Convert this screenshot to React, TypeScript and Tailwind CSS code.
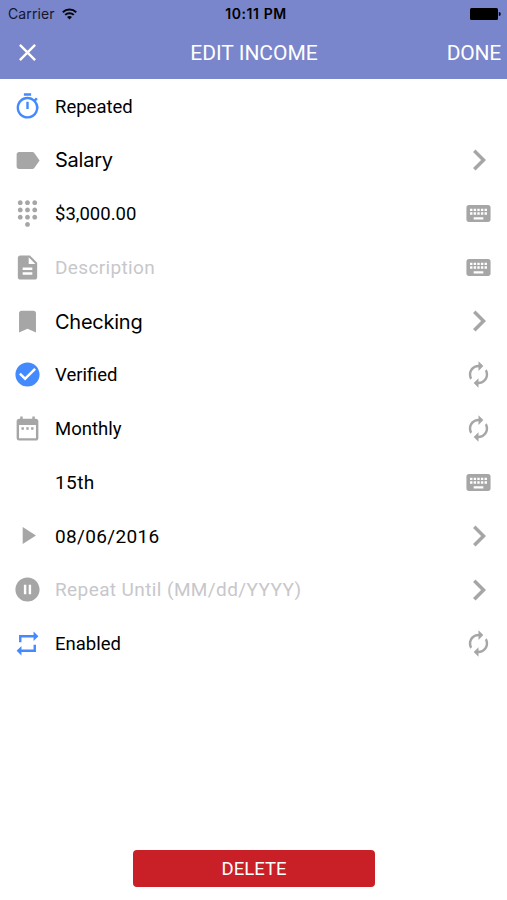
import type { IconType } from 'react-icons'
import {
  MdAutorenew,
  MdBookmark,
  MdCheckCircle,
  MdChevronRight,
  MdClose,
  MdDateRange,
  MdDescription,
  MdDialpad,
  MdKeyboard,
  MdLabel,
  MdOutlineTimer,
  MdPauseCircleFilled,
  MdPlayArrow,
  MdRepeat,
} from 'react-icons/md'

interface RowProps {
  icon?: IconType
  label: string
  action?: 'open' | 'type' | 'toggle'
  active?: boolean
  textClass?: string
}

const rows: RowProps[] = [
  { icon: MdOutlineTimer, label: 'Repeated', active: true },
  { icon: MdLabel, label: 'Salary', action: 'open', textClass: 'font-[Inter] text-[20px] tracking-[-0.25px]' },
  { icon: MdDialpad, label: '$3,000.00', action: 'type' },
  { icon: MdDescription, label: 'Description', action: 'type', textClass: 'pt-[2px] text-[#c7c7cb] text-[19px] tracking-[0.35px]' },
  { icon: MdBookmark, label: 'Checking', action: 'open', textClass: 'pt-px font-[Inter] text-[20px] tracking-[-0.25px]' },
  { icon: MdCheckCircle, label: 'Verified', action: 'toggle', active: true },
  { icon: MdDateRange, label: 'Monthly', action: 'toggle' },
  { label: '15th', action: 'type', textClass: 'pt-[3px] text-[19px] tracking-[0.4px]' },
  { icon: MdPlayArrow, label: '08/06/2016', action: 'open', textClass: 'pt-[3px] text-[19px] tracking-[0.35px]' },
  { icon: MdPauseCircleFilled, label: 'Repeat Until (MM/dd/YYYY)', action: 'open', textClass: 'pt-[2px] text-[#c7c7cb] text-[19px] tracking-[0.4px]' },
  { icon: MdRepeat, label: 'Enabled', action: 'toggle', active: true },
]

function Row({ icon: Icon, label, action, active, textClass = 'pt-[3px] text-[18.5px]' }: RowProps) {
  return (
    <li className="flex h-[53.7px] items-center">
      <span className={`flex w-[55px] justify-center ${active ? 'text-[#448aff]' : 'text-[#a6a6a6]'}`}>
        {Icon && <Icon className="size-[29px]" />}
      </span>
      <span className={`flex-1 whitespace-nowrap ${textClass}`}>{label}</span>
      <span className="flex w-[57px] justify-center text-[#a6a6a6]">
        {action === 'open' && <MdChevronRight className="size-[42px]" />}
        {action === 'type' && <MdKeyboard className="size-[29px]" />}
        {action === 'toggle' && <MdAutorenew className="size-[29px]" />}
      </span>
    </li>
  )
}

function StatusBar() {
  return (
    <div className="grid h-[27px] grid-cols-3 items-center pl-2 pr-[6px] font-[Inter] text-[14px] text-[#14162b]">
      <div className="flex items-center gap-[7px]">
        <span className="tracking-[0.1px]">Carrier</span>
        <svg width="15" height="12" viewBox="0 0 15 12" fill="none" stroke="#05060c" strokeWidth="2">
          <path d="M.8 4.3a9.6 9.6 0 0 1 13.4 0M3.2 6.9a6.2 6.2 0 0 1 8.6 0" />
          <path d="M7.5 11.6 5 9.1a3.6 3.6 0 0 1 5 0z" fill="#05060c" stroke="none" />
        </svg>
      </div>
      <span className="pl-[3px] text-center font-semibold tracking-[0.6px] text-black">10:11 PM</span>
      <svg className="justify-self-end" width="31" height="12" viewBox="0 0 31 12">
        <rect width="28" height="12" rx="1.5" />
        <path d="M28.8 4a2 2 0 0 1 0 4z" />
      </svg>
    </div>
  )
}

export default function App() {
  return (
    <div className="flex h-[900px] w-[507px] flex-col bg-white font-[Roboto] text-black">
      <header className="h-[79px] bg-[#7986cb]">
        <StatusBar />
        <div className="grid h-[50px] grid-cols-3 items-center pr-[6px] text-[21px] text-white">
          <button className="flex w-[55px] justify-center">
            <MdClose className="size-[29px]" />
          </button>
          <h1 className="pl-[7px] pt-[3px] text-center">EDIT INCOME</h1>
          <button className="pt-[3px] text-right tracking-[-0.2px]">DONE</button>
        </div>
      </header>

      <ul className="flex-1 pt-[0.5px]">
        {rows.map((row) => (
          <Row key={row.label} {...row} />
        ))}
      </ul>

      <button className="mb-[13px] ml-[133px] h-[37px] w-[242px] rounded bg-[#c92027] pt-[2px] text-[18.5px] text-white">
        DELETE
      </button>
    </div>
  )
}
